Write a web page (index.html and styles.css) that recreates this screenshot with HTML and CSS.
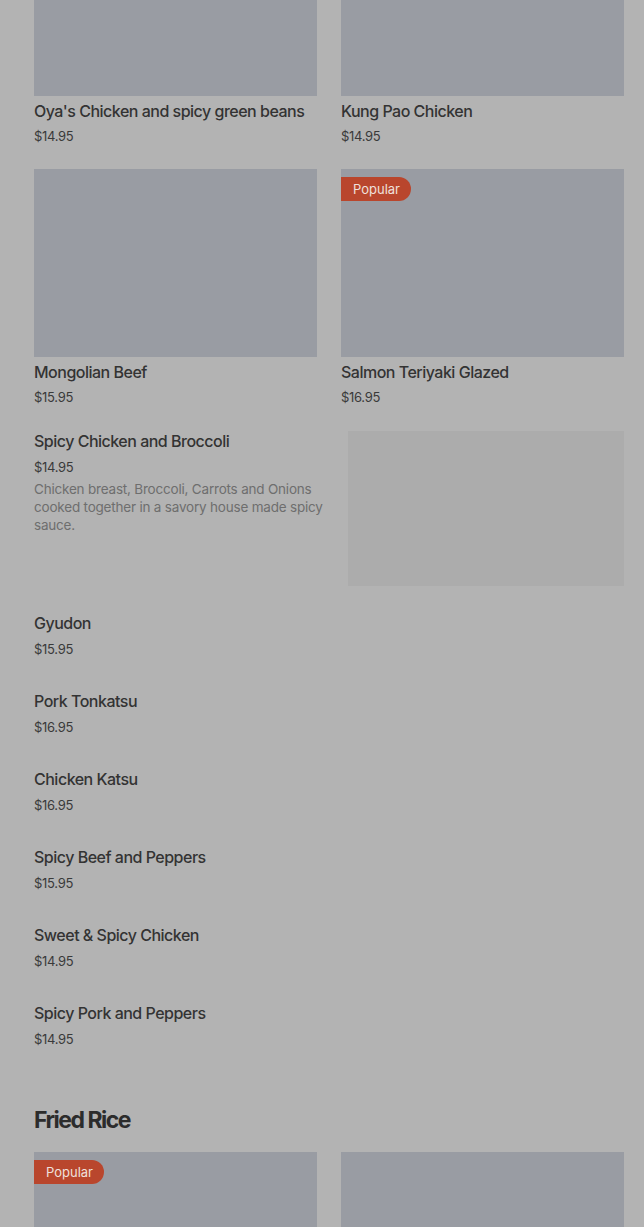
FILE: index.html
```html
<!DOCTYPE html>
<html>
<head>
<meta charset="utf-8">
<link rel="stylesheet" href="styles.css">
</head>
<body>
<main class="menu">
  <section class="grid">
    <div class="card">
      <div class="thumb"></div>
      <div class="title">Oya's Chicken and spicy green beans</div>
      <div class="price">$14.95</div>
    </div>
    <div class="card">
      <div class="thumb"></div>
      <div class="title">Kung Pao Chicken</div>
      <div class="price">$14.95</div>
    </div>
    <div class="card">
      <div class="thumb"></div>
      <div class="title">Mongolian Beef</div>
      <div class="price">$15.95</div>
    </div>
    <div class="card">
      <div class="thumb"><span class="badge">Popular</span></div>
      <div class="title">Salmon Teriyaki Glazed</div>
      <div class="price">$16.95</div>
    </div>
  </section>

  <section class="feature">
    <div class="feature-text">
      <div class="title flush">Spicy Chicken and Broccoli</div>
      <div class="price loose">$14.95</div>
      <div class="desc">Chicken breast, Broccoli, Carrots and Onions cooked together in a savory house made spicy sauce.</div>
    </div>
    <div class="feature-img"></div>
  </section>

  <section class="list">
    <div class="item"><div class="title flush">Gyudon</div><div class="price loose">$15.95</div></div>
    <div class="item"><div class="title flush">Pork Tonkatsu</div><div class="price loose">$16.95</div></div>
    <div class="item"><div class="title flush">Chicken Katsu</div><div class="price loose">$16.95</div></div>
    <div class="item"><div class="title flush">Spicy Beef and Peppers</div><div class="price loose">$15.95</div></div>
    <div class="item"><div class="title flush">Sweet &amp; Spicy Chicken</div><div class="price loose">$14.95</div></div>
    <div class="item"><div class="title flush">Spicy Pork and Peppers</div><div class="price loose">$14.95</div></div>
  </section>

  <h2 class="section-title">Fried Rice</h2>

  <section class="grid">
    <div class="card">
      <div class="thumb"><span class="badge">Popular</span></div>
    </div>
    <div class="card">
      <div class="thumb"></div>
    </div>
  </section>
</main>
</body>
</html>
```
FILE: styles.css
```css
html, body {
  margin: 0;
  padding: 0;
  background: #b3b3b3;
  overflow: hidden;
}
body {
  font-family: Inter, "Noto Sans", "Liberation Sans", sans-serif;
  color: #333333;
}
.menu {
  padding: 0 20px 0 34px;
  margin-top: -92px;
}
.grid {
  display: grid;
  grid-template-columns: 283px 283px;
  column-gap: 24px;
  row-gap: 24px;
}
.thumb {
  position: relative;
  height: 188px;
  background: #999ca3;
}
.badge {
  position: absolute;
  left: 0;
  top: 8px;
  height: 24px;
  line-height: 24px;
  padding: 0 11px 0 12px;
  background: #b9462d;
  color: #efe0dc;
  font-size: 13px;
  border-radius: 0 12px 12px 0;
}
.title {
  margin-top: 5px;
  font-size: 16px;
  line-height: 20px;
  font-weight: 500;
  color: #333333;
  letter-spacing: -0.5px;
}
.title.flush {
  margin-top: 0;
}
.price {
  margin-top: 6px;
  font-size: 13px;
  line-height: 18px;
  color: #3a3a3a;
  letter-spacing: -0.3px;
}
.price.loose {
  margin-top: 7px;
}
.feature {
  display: flex;
  justify-content: space-between;
  margin-top: 25px;
}
.feature-text {
  width: 296px;
}
.desc {
  margin-top: 4px;
  font-size: 13.5px;
  line-height: 18px;
  color: #6e6e6e;
  letter-spacing: -0.2px;
}
.feature-img {
  width: 276px;
  height: 155px;
  background: #acacac;
}
.list {
  margin-top: 27px;
}
.item {
  height: 78px;
}
.section-title {
  margin: 23px 0 16px;
  font-size: 23px;
  line-height: 32px;
  font-weight: 700;
  letter-spacing: -1.5px;
  color: #2c2c2c;
}
```
